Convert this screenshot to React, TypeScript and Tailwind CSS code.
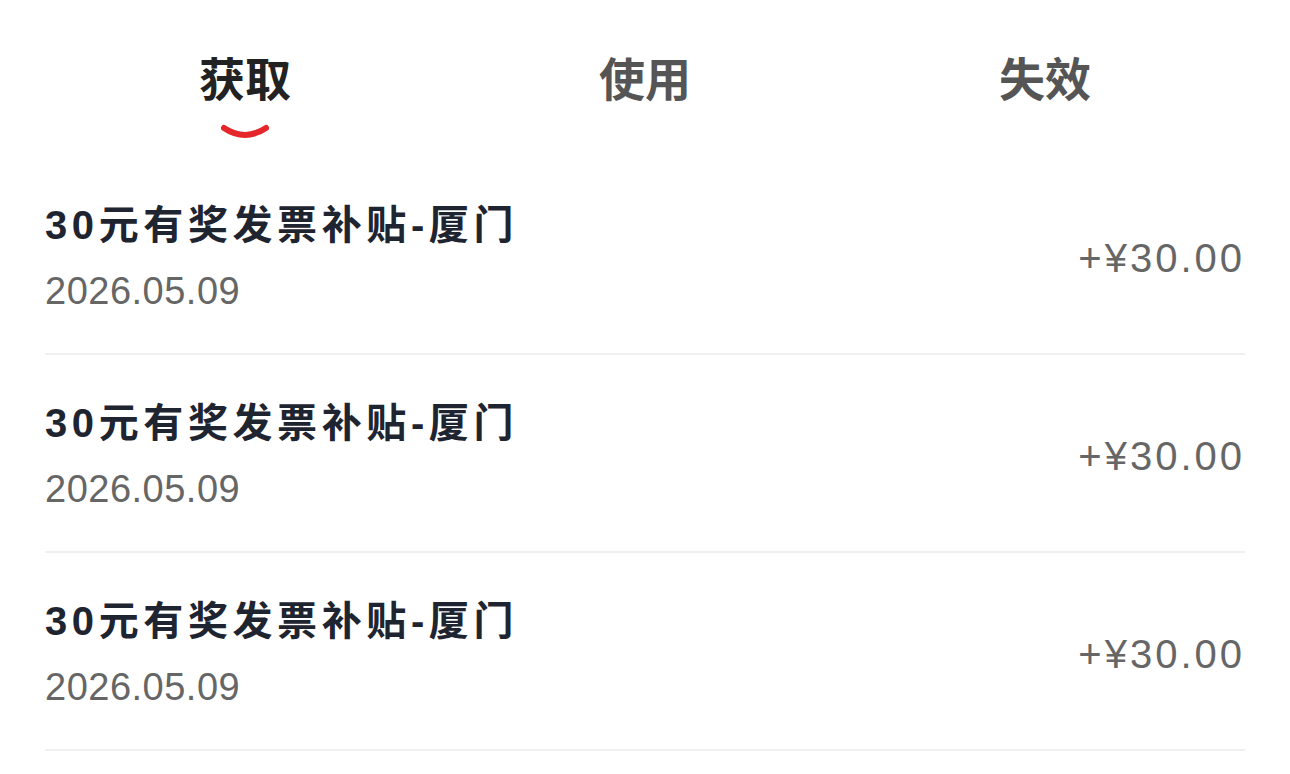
import { FC } from 'react';

type Record = {
  id: number;
  title: string;
  date: string;
  amount: string;
};

const tabs = ['获取', '使用', '失效'];

const records: Record[] = [
  { id: 1, title: '30元有奖发票补贴-厦门', date: '2026.05.09', amount: '+¥30.00' },
  { id: 2, title: '30元有奖发票补贴-厦门', date: '2026.05.09', amount: '+¥30.00' },
  { id: 3, title: '30元有奖发票补贴-厦门', date: '2026.05.09', amount: '+¥30.00' },
];

const font = { fontFamily: '"Liberation Sans", "Noto Sans CJK SC", sans-serif' };

const TabBar: FC<{ active: number }> = ({ active }) => (
  <div className="grid h-[157px] grid-cols-3">
    {tabs.map((tab, i) => (
      <div key={tab} className="flex flex-col items-center pt-[52px]">
        <span
          className={`text-[46px] leading-[56px] font-bold ${i === active ? 'text-[#222222]' : 'text-[#555555]'}`}
        >
          {tab}
        </span>
        {i === active && (
          <svg width="50" height="16" viewBox="0 0 50 16" className="mt-[16px]">
            <path d="M4 4 Q25 18 46 4" stroke="#e5262b" strokeWidth="6" strokeLinecap="round" fill="none" />
          </svg>
        )}
      </div>
    ))}
  </div>
);

const RecordRow: FC<{ record: Record }> = ({ record }) => (
  <div className="flex h-[198px] items-center justify-between border-b-2 border-[#f0f0f0] pt-[6px]">
    <div className="flex flex-col gap-[18px]">
      <span className="text-[40px] leading-[48px] font-bold tracking-[4.6px] text-[#1f2530]">{record.title}</span>
      <span className="text-[38px] leading-[48px] tracking-[0.5px] text-[#666666]">{record.date}</span>
    </div>
    <span className="text-[40px] leading-[48px] tracking-[3px] text-[#666666]">{record.amount}</span>
  </div>
);

export default function App() {
  return (
    <div className="h-[774px] w-[1290px] overflow-hidden bg-white px-[45px]" style={font}>
      <TabBar active={0} />
      <div className="flex flex-col">
        {records.map(record => (
          <RecordRow key={record.id} record={record} />
        ))}
      </div>
    </div>
  );
}
